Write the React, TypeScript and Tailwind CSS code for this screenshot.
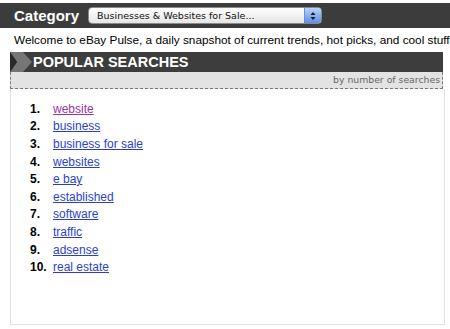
import React from "react"

const searches = [
  "website",
  "business",
  "business for sale",
  "websites",
  "e bay",
  "established",
  "software",
  "traffic",
  "adsense",
  "real estate"
]

const App = () => {
  return (
    <div className="w-[450px] h-[329px] bg-white overflow-hidden font-['Liberation_Sans',Arial,sans-serif] text-black">
      {/* Category bar */}
      <div className="pt-[3px]">
        <div className="h-[25px] bg-[#3c3c3c] flex items-center pl-[14px]">
          <span className="text-white font-bold text-[15px] leading-none">Category</span>
          <div className="ml-[9px] w-[234px] h-[17px] rounded-[4px] bg-gradient-to-b from-white to-[#e6e6e6] border border-[#8a8a8a] flex items-center overflow-hidden">
            <span className="flex-1 pl-[8px] text-[9.5px] leading-none font-['DejaVu_Sans',Verdana,sans-serif] text-[#111] whitespace-nowrap">
              Businesses &amp; Websites for Sale...
            </span>
            <div className="w-[17px] h-full bg-gradient-to-b from-[#b9d3fb] to-[#5b8fe6] border-l border-[#6b8fd0] flex items-center justify-center">
              <svg width="6" height="10" viewBox="0 0 6 10">
                <polygon points="3,1 5.5,4 0.5,4" fill="#1a1a1a" />
                <polygon points="0.5,6 5.5,6 3,9" fill="#1a1a1a" />
              </svg>
            </div>
          </div>
        </div>
      </div>

      {/* Intro */}
      <p className="mt-[5px] pl-[14px] text-[11.8px] leading-[15px] whitespace-nowrap">
        Welcome to eBay Pulse, a daily snapshot of current trends, hot picks, and cool stuff
      </p>

      {/* Popular searches panel */}
      <div className="mt-[4px] ml-[10px] w-[435px]">
        <div className="w-[433px] h-[20px] bg-[#3d3d3d] flex items-center">
          <svg width="23" height="20" viewBox="0 0 23 20" className="shrink-0">
            <polygon points="0,0 13,0 22,10 13,20 0,20 7,10" fill="#767676" />
            <polygon points="0,0 7,10 0,20" fill="#2a2a2a" />
          </svg>
          <span className="text-white font-bold text-[14.5px] leading-none">POPULAR SEARCHES</span>
        </div>
        <div className="w-[433px] h-[17px] bg-[#e3e3e3] border-l border-r border-b border-dashed border-[#7a7a7a] flex items-center justify-end pr-[2px]">
          <span className="text-[9.3px] leading-none text-[#666] font-['DejaVu_Sans',Verdana,sans-serif]">by number of searches</span>
        </div>
        <div className="h-[236px] border-l border-r border-b border-[#e4e4da] pt-[11px]">
          <ul>
            {searches.map((s, i) => (
              <li key={s} className="flex items-center h-[17.6px] text-[12px]">
                <span className="w-[23px] ml-[19px] font-bold">{i + 1}.</span>
                <a
                  href="#"
                  className={`underline ${i === 0 ? "text-[#9933a8]" : "text-[#2a3fd0]"}`}
                >
                  {s}
                </a>
              </li>
            ))}
          </ul>
        </div>
      </div>
    </div>
  )
}

export default App
